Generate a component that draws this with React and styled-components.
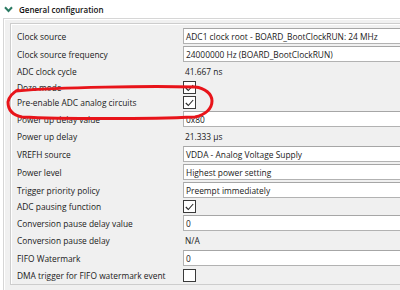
import React from "react";
import styled, { createGlobalStyle } from "styled-components";

const Global = createGlobalStyle`
  html, body { margin: 0; padding: 0; background: #ffffff; overflow: hidden; }
  body { font-family: "Open Sans", "Noto Sans", sans-serif; font-size: 8.4px; color: #1a1a1a; }
`;

const Page = styled.div`
  position: relative;
  width: 400px;
  height: 290px;
  overflow: hidden;
`;

const Header = styled.div`
  height: 18px;
  display: flex;
  align-items: center;
  gap: 6px;
  padding-left: 4px;
  background: #ffffff;
  font-weight: 600;
  font-size: 8px;
  color: #111;
`;

const Outer = styled.div`
  margin-left: 3px;
  border-left: 1px solid #d6d6d6;
  border-top: 1px solid #d6d6d6;
  box-shadow: inset 1px 1px 0 #ffffff;
  background: #f0f0f0;
  padding: 4px 0 20px 6px;
`;

const Inner = styled.div`
  border: 1px solid #cdcdcd;
  border-right: none;
  box-shadow: inset 1px 1px 0 #ffffff;
  padding: 3px 0 1px 6px;
`;

const Row = styled.div`
  display: grid;
  grid-template-columns: 166px 1fr;
  align-items: center;
  height: ${(p) => p.$h}px;
`;

const Label = styled.div`
  white-space: nowrap;
`;

const Field = styled.div`
  height: 14px;
  border: 1px solid #b2b2b2;
  border-top-color: #a6a6a6;
  border-right: none;
  background: #ffffff;
  padding-left: 2px;
  display: flex;
  align-items: center;
  white-space: nowrap;
  overflow: hidden;
`;

const Value = styled.div`
  padding-left: 2px;
  white-space: nowrap;
`;

const Box = styled.div`
  width: 11px;
  height: 11px;
  border: 1px solid #3a3a3a;
  background: #ffffff;
  display: flex;
  align-items: center;
  justify-content: center;
`;

const Overlay = styled.svg`
  position: absolute;
  left: 0;
  top: 0;
  pointer-events: none;
`;

const Check = ({ on }) => (
  <Box>
    {on && (
      <svg width="9" height="8" viewBox="0 0 9 8">
        <polyline points="0.8,4 3.3,6.5 8.2,1" fill="none" stroke="#262626" strokeWidth="1.1" />
      </svg>
    )}
  </Box>
);

const rows = [
  { label: "Clock source", kind: "field", v: "ADC1 clock root - BOARD_BootClockRUN: 24 MHz" },
  { label: "Clock source frequency", kind: "field", v: "24000000 Hz (BOARD_BootClockRUN)" },
  { label: "ADC clock cycle", kind: "text", v: "41.667 ns" },
  { label: "Doze mode", kind: "check", v: true },
  { label: "Pre-enable ADC analog circuits", kind: "check", v: true },
  { label: "Power up delay value", kind: "field", v: "0x80" },
  { label: "Power up delay", kind: "text", v: "21.333 µs" },
  { label: "VREFH source", kind: "field", v: "VDDA - Analog Voltage Supply" },
  { label: "Power level", kind: "field", v: "Highest power setting" },
  { label: "Trigger priority policy", kind: "field", v: "Preempt immediately" },
  { label: "ADC pausing function", kind: "check", v: true },
  { label: "Conversion pause delay value", kind: "field", v: "0" },
  { label: "Conversion pause delay", kind: "text", v: "N/A" },
  { label: "FIFO Watermark", kind: "field", v: "0" },
  { label: "DMA trigger for FIFO watermark event", kind: "check", v: false, h: 16 },
];

const heights = { field: 18, text: 17, check: 15 };

export default function App() {
  return (
    <Page>
      <Global />
      <Header>
        <svg width="9" height="7" viewBox="0 0 9 7">
          <polyline points="1,1.2 4.5,5 8,1.2" fill="none" stroke="#2b7a63" strokeWidth="2" />
        </svg>
        General configuration
      </Header>
      <Outer>
        <Inner>
          {rows.map((r) => (
            <Row key={r.label} $h={r.h || heights[r.kind]}>
              <Label>{r.label}</Label>
              {r.kind === "field" && <Field>{r.v}</Field>}
              {r.kind === "text" && <Value>{r.v}</Value>}
              {r.kind === "check" && <Check on={r.v} />}
            </Row>
          ))}
        </Inner>
      </Outer>
      <Overlay width="400" height="290" viewBox="0 0 400 290">
        <path
          d="M16 91 C 60 87, 150 86, 195 87 C 205 88, 212 94, 212 101 C 212 109, 205 115, 195 117 C 150 119, 60 119, 22 117 C 12 115, 8 109, 8 102 C 9 97, 12 93, 18 90"
          fill="none"
          stroke="#e8141a"
          strokeWidth="3"
          strokeLinejoin="round"
          strokeLinecap="round"
        />
      </Overlay>
    </Page>
  );
}
